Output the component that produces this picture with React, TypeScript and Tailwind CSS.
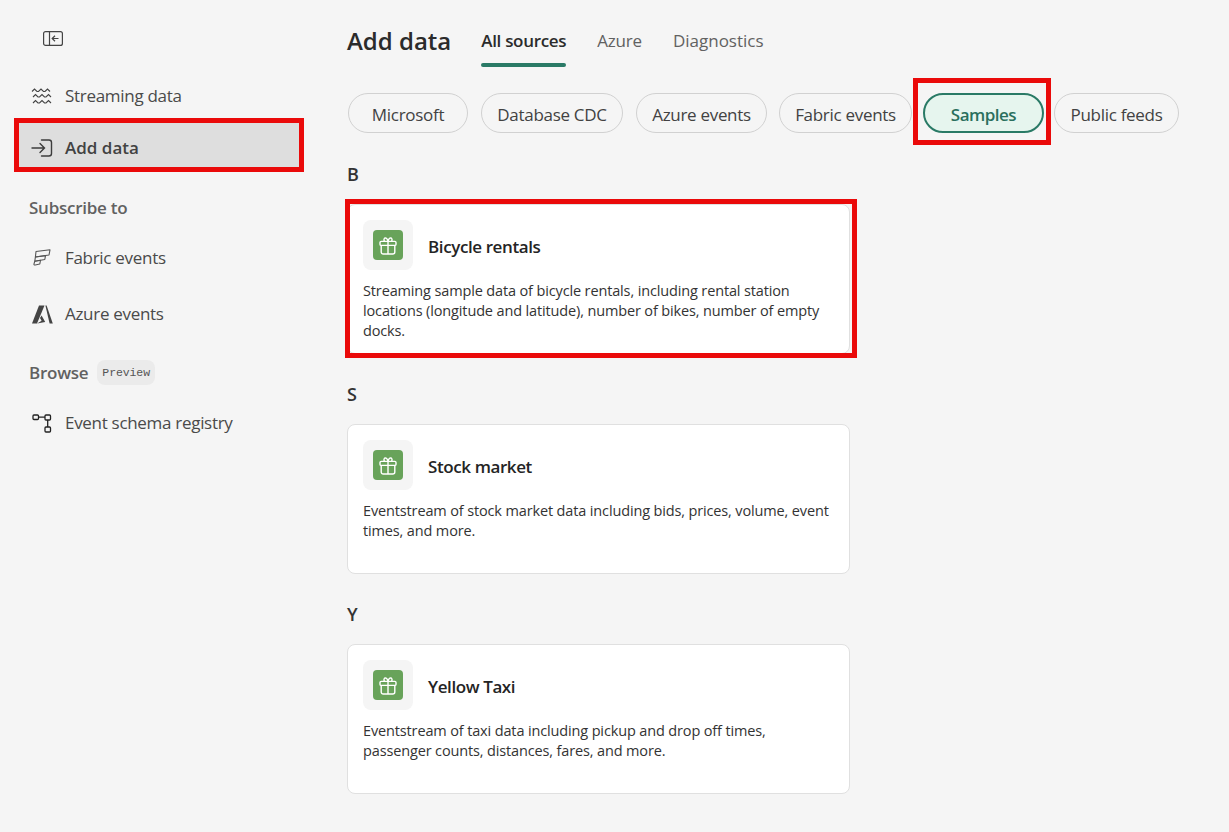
import type { ReactNode } from "react";

const font = "font-['Open_Sans','Noto_Sans',sans-serif]";

const CollapseIcon = () => (
  <svg width="22" height="17" viewBox="0 0 22 17" fill="none" stroke="#444" strokeWidth="1.2">
    <rect x="1.6" y="1.6" width="18.8" height="13.8" rx="2" />
    <path d="M7.5 1.6v13.8" />
    <path d="M16.5 8.5h-6M13 5.8l-2.8 2.7 2.8 2.7" />
  </svg>
);

const WavesIcon = () => (
  <svg width="22" height="18" viewBox="0 0 22 18" fill="none" stroke="#444" strokeWidth="1.1">
    <path d="M1 4.5l2.5-2.5 2.5 2.5h1.5l2.5-2.5 2.5 2.5h1.5l2.5-2.5 2.5 2.5" />
    <path d="M1 10l2.5-2.5L6 10h1.5L10 7.5l2.5 2.5H14l2.5-2.5L19 10" transform="translate(1 0)" />
    <path d="M1 16l2.5-2.5L6 16h1.5l2.5-2.5 2.5 2.5H14l2.5-2.5L19 16" transform="translate(1 0)" />
  </svg>
);

const AddDataIcon = () => (
  <svg width="22" height="18" viewBox="0 0 22 18" fill="none" stroke="#3d3d3d" strokeWidth="1.4" strokeLinecap="round">
    <path d="M1 9h12M9 4.5L13.5 9 9 13.5" />
    <path d="M10.5 1H18a2.5 2.5 0 0 1 2.5 2.5v11A2.5 2.5 0 0 1 18 17h-7.5" />
  </svg>
);

const FabricIcon = () => (
  <svg width="18" height="18" viewBox="0 0 18 18" fill="none" stroke="#555" strokeWidth="1.1" strokeLinejoin="round">
    <path d="M3 2.5L17 .8 16 6 2.4 8z" />
    <path d="M2.4 8l10.1-1.4-.7 3.9-10 1.7z" />
    <path d="M1.8 12.2l5.7-1-.7 3.8-4.6 1c-1.2.2-1.4-.5-1.2-1.2z" />
  </svg>
);

const AzureIcon = () => (
  <svg width="21" height="19" viewBox="0 0 21 19" fill="#444">
    <path d="M7 .5h5.5L5 18.5H0z" />
    <path d="M13.4 .5h1.2L20.8 18.5h-3.2z" />
    <path d="M9.6 10.5l3.6 6.4-8 1.6 4.4-2.8-1.6-2.6z" />
  </svg>
);

const SchemaIcon = () => (
  <svg width="20" height="20" viewBox="0 0 20 20" fill="none" stroke="#222" strokeWidth="1.3">
    <rect x="1" y="2" width="5.5" height="4.5" rx="1" />
    <rect x="13" y="2" width="5.5" height="5" rx="1" />
    <rect x="13" y="14" width="5.5" height="5" rx="1" />
    <path d="M6.5 4.2H13M15.7 7v7" />
  </svg>
);

const GiftIcon = () => (
  <svg width="18" height="19" viewBox="0 0 18 19" fill="none" stroke="white" strokeWidth="1.4" strokeLinejoin="round">
    <path d="M5.5 5.4C4 3.6 5.8 1 7.4 2.3 8.4 3.1 9 5.4 9 5.4s.6-2.3 1.6-3.1c1.6-1.3 3.4 1.3 1.9 3.1" />
    <rect x="1" y="5.4" width="16" height="4" rx="1.2" />
    <path d="M2.2 9.4V16a2 2 0 0 0 2 2h9.6a2 2 0 0 0 2-2V9.4M9 5.4V18" />
  </svg>
);

const NavItem = ({ icon, label, className }: { icon: ReactNode; label: string; className: string }) => (
  <div className={`flex items-center pl-[12px] ${className}`}>
    <span className="flex w-[22px] justify-center">{icon}</span>
    <span className="ml-[12px] text-[17px] text-[#4a4a4a] tracking-[-0.3px]">{label}</span>
  </div>
);

const SectionLabel = ({ children, className }: { children: ReactNode; className: string }) => (
  <div className={`flex items-center pl-[10px] text-[17px] font-semibold text-[#616161] tracking-[-0.25px] ${className}`}>
    {children}
  </div>
);

const pills = [
  { label: "Microsoft", w: "w-[120px]", ml: "ml-0" },
  { label: "Database CDC", w: "w-[142px]", ml: "ml-[13px]" },
  { label: "Azure events", w: "w-[131px]", ml: "ml-[13px]" },
  { label: "Fabric events", w: "w-[133px]", ml: "ml-[12px]" },
];

const Pill = ({ label, w, ml }: { label: string; w: string; ml: string }) => (
  <div className={`flex h-[40px] items-center justify-center rounded-full border border-[#d1d1d1] pt-[3px] text-[17px] text-[#424242] tracking-[-0.3px] ${w} ${ml}`}>
    {label}
  </div>
);

const Card = ({ title, desc }: { title: string; desc: string }) => (
  <div className="h-[150px] w-[503px] rounded-[8px] border border-[#e0e0e0] bg-white px-[15px] pt-[15px]">
    <div className="flex items-center">
      <div className="flex h-[50px] w-[50px] items-center justify-center rounded-[8px] bg-[#f5f5f5]">
        <div className="flex h-[30px] w-[30px] items-center justify-center rounded-[4px] bg-[#68a35a]">
          <GiftIcon />
        </div>
      </div>
      <div className="ml-[15px] mt-[3px] text-[17px] font-semibold text-[#242424] tracking-[-0.4px]">{title}</div>
    </div>
    <p className="mt-[11px] text-[14.5px] leading-[20px] text-[#333] tracking-[-0.14px]">{desc}</p>
  </div>
);

const Letter = ({ children, className }: { children: string; className: string }) => (
  <div className={`text-[18px] leading-[24px] font-semibold text-[#333] ${className}`}>{children}</div>
);

export default function App() {
  return (
    <div className={`flex h-[832px] w-[1229px] overflow-hidden bg-[#f5f5f5] ${font}`}>
      <aside className="w-[347px] shrink-0 pl-[19px]">
        <div className="pl-[23px] pt-[30px]">
          <CollapseIcon />
        </div>
        <NavItem icon={<WavesIcon />} label="Streaming data" className="mt-[27px] h-[44px]" />
        <div className="relative mt-[5px] w-[280px]">
          <div className="flex h-[44px] items-center bg-[#dedede] pl-[12px] pt-[6px]">
            <span className="flex w-[22px] justify-center"><AddDataIcon /></span>
            <span className="ml-[12px] text-[17px] font-semibold text-[#424242]">Add data</span>
          </div>
          <div className="absolute -inset-[5px] border-[5px] border-[#ea0a0a]" />
        </div>
        <SectionLabel className="mt-[27px] h-[28px]">Subscribe to</SectionLabel>
        <NavItem icon={<FabricIcon />} label="Fabric events" className="mt-[14px] h-[44px]" />
        <NavItem icon={<AzureIcon />} label="Azure events" className="mt-[12px] h-[44px]" />
        <SectionLabel className="mt-[23px] h-[28px]">
          Browse
          <span className="ml-[9px] -translate-y-[1px] rounded-[8px] bg-[#ebebeb] px-[5px] py-[4px] font-['Liberation_Mono',monospace] text-[11.5px] leading-[17px] font-normal tracking-[-0.1px] text-[#555]">
            Preview
          </span>
        </SectionLabel>
        <NavItem icon={<SchemaIcon />} label="Event schema registry" className="mt-[14px] h-[44px]" />
      </aside>

      <main className="min-w-0 flex-1">
        <div className="flex h-[67px] items-start">
          <h1 className="mt-[23px] text-[24px] leading-[36px] font-semibold text-[#2b2b2b]">Add data</h1>
          <div className="ml-[30px] flex">
            <div className="flex h-[67px] w-[85px] flex-col items-center">
              <span className="mt-[29px] whitespace-nowrap text-[17px] leading-[24px] font-semibold text-[#2b2b2b] tracking-[-0.3px]">All sources</span>
              <span className="mt-auto h-[4px] w-full rounded-[2px] bg-[#2a7a66]" />
            </div>
            <span className="ml-[31px] mt-[29px] text-[17px] leading-[24px] text-[#616161] tracking-[-0.2px]">Azure</span>
            <span className="ml-[31px] mt-[29px] text-[17px] leading-[24px] text-[#616161]">Diagnostics</span>
          </div>
        </div>

        <div className="mt-[26px] flex pl-[1px]">
          {pills.map((p) => (
            <Pill key={p.label} {...p} />
          ))}
          <div className="relative ml-[11px]">
            <div className="flex h-[40px] w-[121px] items-center justify-center rounded-full border-2 border-[#2a7a66] bg-[#e6f5ee] pt-[3px] text-[17px] font-semibold text-[#2a6f5d] tracking-[-0.5px]">
              Samples
            </div>
            <div className="absolute -left-[10px] -right-[7px] -top-[15px] -bottom-[12px] border-[5px] border-[#ea0a0a]" />
          </div>
          <Pill label="Public feeds" w="w-[125px]" ml="ml-[10px]" />
        </div>

        <Letter className="mt-[29px]">B</Letter>
        <div className="relative mt-[18px] w-[503px]">
          <Card
            title="Bicycle rentals"
            desc="Streaming sample data of bicycle rentals, including rental station locations (longitude and latitude), number of bikes, number of empty docks."
          />
          <div className="absolute -left-[2px] -right-[7px] -top-[5px] -bottom-[4px] border-[5px] border-[#ea0a0a]" />
        </div>
        <Letter className="mt-[28px]">S</Letter>
        <div className="mt-[18px]">
          <Card
            title="Stock market"
            desc="Eventstream of stock market data including bids, prices, volume, event times, and more."
          />
        </div>
        <Letter className="mt-[28px]">Y</Letter>
        <div className="mt-[18px]">
          <Card
            title="Yellow Taxi"
            desc="Eventstream of taxi data including pickup and drop off times, passenger counts, distances, fares, and more."
          />
        </div>
      </main>
    </div>
  );
}
